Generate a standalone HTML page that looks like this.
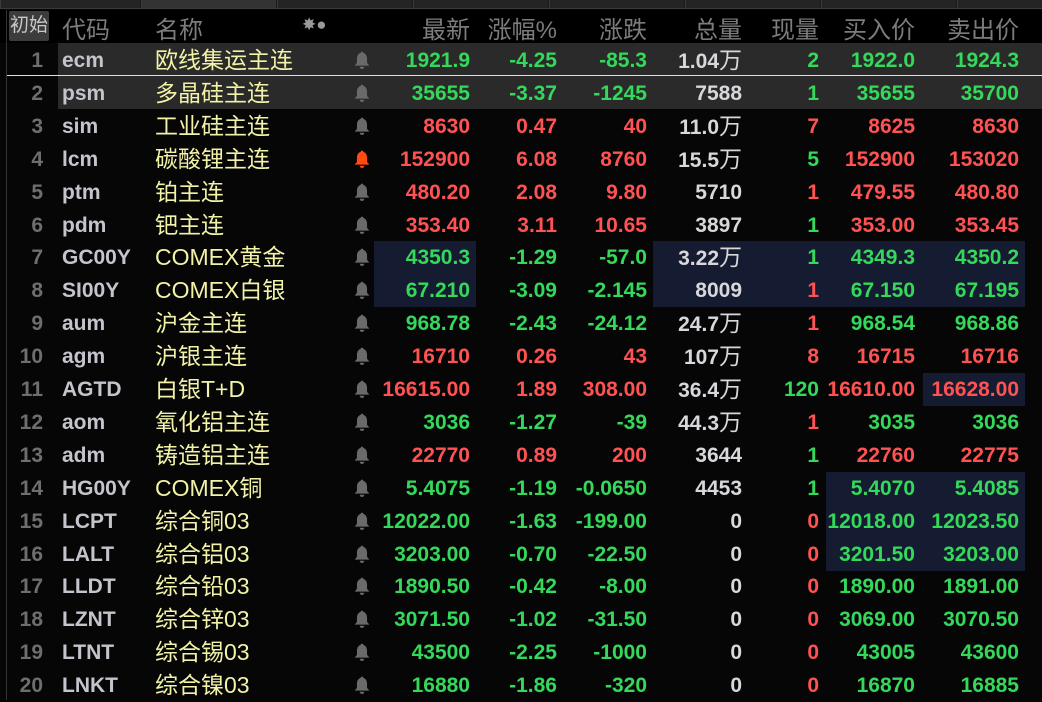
<!DOCTYPE html>
<html><head><meta charset="utf-8"><style>
*{margin:0;padding:0;box-sizing:border-box}
body{width:1042px;height:700px;background:#060606;overflow:hidden;position:relative;font-family:"Liberation Sans","Noto Sans CJK SC",sans-serif}
.tabs{position:absolute;left:0;top:0;width:1042px;height:9px;background:#1a1a1a;border-bottom:1px solid #3a3a3a}
.tab{position:absolute;top:0;height:8px;border-left:1px solid #3a3a3a;background:#242424}
.hdr{position:absolute;top:10px;left:0;width:1042px;height:33px;background:#000;color:#7c7c7c;font-size:24px}
.hdr span{position:absolute;top:0px;white-space:nowrap}
.init{position:absolute;left:9px;top:11px;width:40px;height:30px;background:#3c3c3c;color:#c8c8c8;font-size:19px;text-align:center;line-height:30px;border-radius:2px}
.row{position:absolute;left:0;width:1042px;height:33px}
.row span{position:absolute;top:1px;line-height:33px;white-space:nowrap;font-weight:bold;font-size:21px}
.idx{color:#6e6e6e;right:999px}
.code{left:62px;color:#c4c4cc}
.name{left:155px;color:#f2f2a8;font-weight:normal!important;font-size:23px!important}
.g{color:#34d85a}.d{color:#ff5252}.w{color:#d8d8dc}
.hl{position:absolute;background:#151b30}
.vl{position:absolute;left:6px;top:10px;width:1px;height:690px;background:#333}
</style></head><body>
<div class="tabs">
<div class="tab" style="left:0;width:140px"></div>
<div class="tab" style="left:141px;width:135px;background:#333"></div>
<div class="tab" style="left:277px;width:135px"></div>
<div class="tab" style="left:413px;width:135px"></div>
<div class="tab" style="left:549px;width:135px"></div>
<div class="tab" style="left:685px;width:135px"></div>
<div class="tab" style="left:821px;width:135px"></div>
<div class="tab" style="left:957px;width:85px"></div>
</div>
<div class="hdr">
<span style="left:62px">代码</span><span style="left:155px">名称</span>
<span style="left:302px;top:5px;font-size:17px;color:#999">✸●</span>
<span style="right:572px">最新</span><span style="right:485px">涨幅%</span><span style="right:395px">涨跌</span>
<span style="right:300px">总量</span><span style="right:223px">现量</span><span style="right:127px">买入价</span><span style="right:23px">卖出价</span>
</div>
<div class="init">初始</div>
<div style="position:absolute;left:58px;top:43px;width:984px;height:66px;background:#2a2a2a"></div>
<div style="position:absolute;left:6px;top:75px;width:1036px;height:1px;background:#e8e8a0"></div>
<div class="hl" style="left:374px;top:241px;width:102px;height:66px"></div>
<div class="hl" style="left:653px;top:241px;width:372px;height:66px"></div>
<div class="hl" style="left:923px;top:373px;width:102px;height:33px"></div>
<div class="hl" style="left:826px;top:472px;width:199px;height:99px"></div>
<div class="vl"></div>
<div id="rows"></div>
<svg width="0" height="0" style="position:absolute"><defs><symbol id="b" viewBox="0 0 14 16"><path d="M7 0.5c.8 0 1.2.6 1.2 1.2C10.5 2.4 11.5 4.5 11.5 7v3.5l2 2.5H.5l2-2.5V7C2.5 4.5 3.5 2.4 5.8 1.7 5.8 1.1 6.2.5 7 .5zM5 14h4a2 2 0 0 1-4 0z"/></symbol></defs></svg>
<script>
var D=[
["ecm","欧线集运主连","g","1921.9","-4.25","-85.3","1.04万","g2","1922.0","1924.3"],
["psm","多晶硅主连","g","35655","-3.37","-1245","7588","g1","35655","35700"],
["sim","工业硅主连","d","8630","0.47","40","11.0万","d7","8625","8630"],
["lcm","碳酸锂主连","d","152900","6.08","8760","15.5万","g5","152900","153020",1],
["ptm","铂主连","d","480.20","2.08","9.80","5710","d1","479.55","480.80"],
["pdm","钯主连","d","353.40","3.11","10.65","3897","g1","353.00","353.45"],
["GC00Y","COMEX黄金","g","4350.3","-1.29","-57.0","3.22万","g1","4349.3","4350.2"],
["SI00Y","COMEX白银","g","67.210","-3.09","-2.145","8009","d1","67.150","67.195"],
["aum","沪金主连","g","968.78","-2.43","-24.12","24.7万","d1","968.54","968.86"],
["agm","沪银主连","d","16710","0.26","43","107万","d8","16715","16716"],
["AGTD","白银T+D","d","16615.00","1.89","308.00","36.4万","g120","16610.00","16628.00"],
["aom","氧化铝主连","g","3036","-1.27","-39","44.3万","d1","3035","3036"],
["adm","铸造铝主连","d","22770","0.89","200","3644","g1","22760","22775"],
["HG00Y","COMEX铜","g","5.4075","-1.19","-0.0650","4453","g1","5.4070","5.4085"],
["LCPT","综合铜03","g","12022.00","-1.63","-199.00","0","d0","12018.00","12023.50"],
["LALT","综合铝03","g","3203.00","-0.70","-22.50","0","d0","3201.50","3203.00"],
["LLDT","综合铅03","g","1890.50","-0.42","-8.00","0","d0","1890.00","1891.00"],
["LZNT","综合锌03","g","3071.50","-1.02","-31.50","0","d0","3069.00","3070.50"],
["LTNT","综合锡03","g","43500","-2.25","-1000","0","d0","43005","43600"],
["LNKT","综合镍03","g","16880","-1.86","-320","0","d0","16870","16885"]];
var h="";
D.forEach(function(r,i){
var t=43+i*32.9,c=r[2];
h+='<div class="row" style="top:'+t+'px">'+
'<span class="idx">'+(i+1)+'</span><span class="code">'+r[0]+'</span><span class="name">'+r[1]+'</span>'+
'<svg style="position:absolute;left:354px;top:8px;width:16px;height:18px;fill:'+(r[10]?'#ff4a10':'#6a6a6a')+'" viewBox="0 0 14 16"><use href="#b"/></svg>'+
'<span class="'+c+'" style="right:572px">'+r[3]+'</span>'+
'<span class="'+c+'" style="right:485px">'+r[4]+'</span>'+
'<span class="'+c+'" style="right:395px">'+r[5]+'</span>'+
'<span class="w" style="right:300px">'+r[6].replace('万','<b style="font-weight:normal;font-size:23px">万</b>')+'</span>'+
'<span class="'+r[7][0]+'" style="right:223px">'+r[7].slice(1)+'</span>'+
'<span class="'+c+'" style="right:127px">'+r[8]+'</span>'+
'<span class="'+c+'" style="right:23px">'+r[9]+'</span></div>';
});
document.getElementById('rows').innerHTML=h;
</script>
</body></html>
